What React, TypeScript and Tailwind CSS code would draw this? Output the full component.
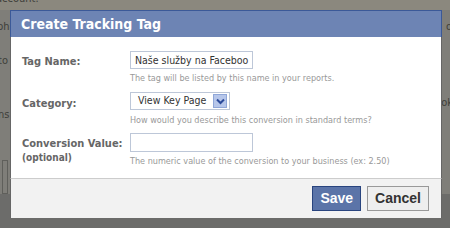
import React from "react";

const tahoma = { fontFamily: '"DejaVu Sans Condensed", "DejaVu Sans", sans-serif' };

export default function App() {
  return (
    <div className="relative w-[450px] h-[228px] overflow-hidden bg-[#7f7e79]" style={tahoma}>
      {/* page behind the overlay */}
      <div className="flex flex-col h-full text-[11px] leading-[14px] text-[#3e3e3a]">
        <div className="h-[10px] shrink-0 bg-[#8b887e] overflow-hidden">
          <div className="-mt-[8px] -ml-[4px]">account.</div>
        </div>
        <div className="mt-[10px] flex justify-between"><span className="-ml-[3px]">ph</span><span className="-mr-[2px]">o</span></div>
        <div className="mt-[62px] flex justify-end"><span className="-mr-[3px]">ok</span></div>
        <div className="mt-[-56px] -ml-[2px]">to</div>
        <div className="mt-[40px] -ml-[2px]">ns</div>
        <div className="mt-[38px] ml-[2px] w-[6px] h-[34px] border border-[#5f5f5b]"></div>
        <div className="flex-1 bg-[#6c6c6a]"></div>
      </div>

      {/* modal overlay */}
      <div className="absolute inset-0 p-[10px] pr-[8px] pb-[10px]">
        <div className="flex flex-col w-[432px] h-[208px] bg-white">
          <div className="h-[27px] flex items-center px-[10px] pt-[1px] bg-[#6d84b4] border border-b-0 border-[#3b5998] text-white font-bold text-[14px]">
            Create Tracking Tag
          </div>
          <div className="flex-1 flex flex-col pl-[11px] pt-[14px] text-[11px] border-x border-[#666]">
            <div className="flex">
              <div className="w-[108px] pt-[3px] font-bold text-[#666]">Tag Name:</div>
              <div className="flex flex-col">
                <div className="w-[123px] h-[18px] border border-[#bdc7d8] bg-white overflow-hidden whitespace-nowrap pl-[4px] leading-[16px] text-[10.5px] text-[#333]">
                  Naše služby na Faceboo
                </div>
                <div className="mt-[3px] text-[9px] leading-[12px] text-[#999]">The tag will be listed by this name in your reports.</div>
              </div>
            </div>
            <div className="flex mt-[8px]">
              <div className="w-[108px] pt-[4px] font-bold text-[#666]">Category:</div>
              <div className="flex flex-col">
                <div className="w-[100px] h-[18px] border border-[#bdc7d8] bg-white flex items-center justify-between pl-[7px] pr-[2px] text-[10.5px] text-[#333]">
                  <span>View Key Page</span>
                  <span className="w-[14px] h-[14px] bg-[#b6c6ea] border border-[#8fa6d8] flex items-center justify-center">
                    <svg width="9" height="7" viewBox="0 0 9 7"><path d="M1 1.5 L4.5 5 L8 1.5" stroke="#2b4a9a" strokeWidth="2" fill="none" /></svg>
                  </span>
                </div>
                <div className="mt-[4px] text-[9px] leading-[12px] text-[#999]">How would you describe this conversion in standard terms?</div>
              </div>
            </div>
            <div className="flex mt-[7px]">
              <div className="w-[108px] pt-[4px] font-bold text-[#666] leading-[14px]">
                <div>Conversion Value:</div>
                <div className="text-[10px]">(optional)</div>
              </div>
              <div className="flex flex-col">
                <div className="w-[123px] h-[19px] border border-[#bdc7d8] bg-white"></div>
                <div className="mt-[3px] text-[9px] leading-[12px] text-[#999]">The numeric value of the conversion to your business (ex: 2.50)</div>
              </div>
            </div>
          </div>
          <div className="h-[40px] flex items-center justify-end gap-[6px] pr-[12px] bg-[#f2f2f2] border-t border-[#ccc] border-x border-x-[#666]" style={{ fontFamily: '"Liberation Sans", Arial, sans-serif' }}>
            <button className="h-[25px] px-[7px] bg-[#5b74a8] border border-[#29447e] text-white font-bold text-[14px]">Save</button>
            <button className="h-[25px] px-[7px] bg-[#eeeeee] border border-[#999] text-[#333] font-bold text-[14px]">Cancel</button>
          </div>
        </div>
      </div>
    </div>
  );
}
